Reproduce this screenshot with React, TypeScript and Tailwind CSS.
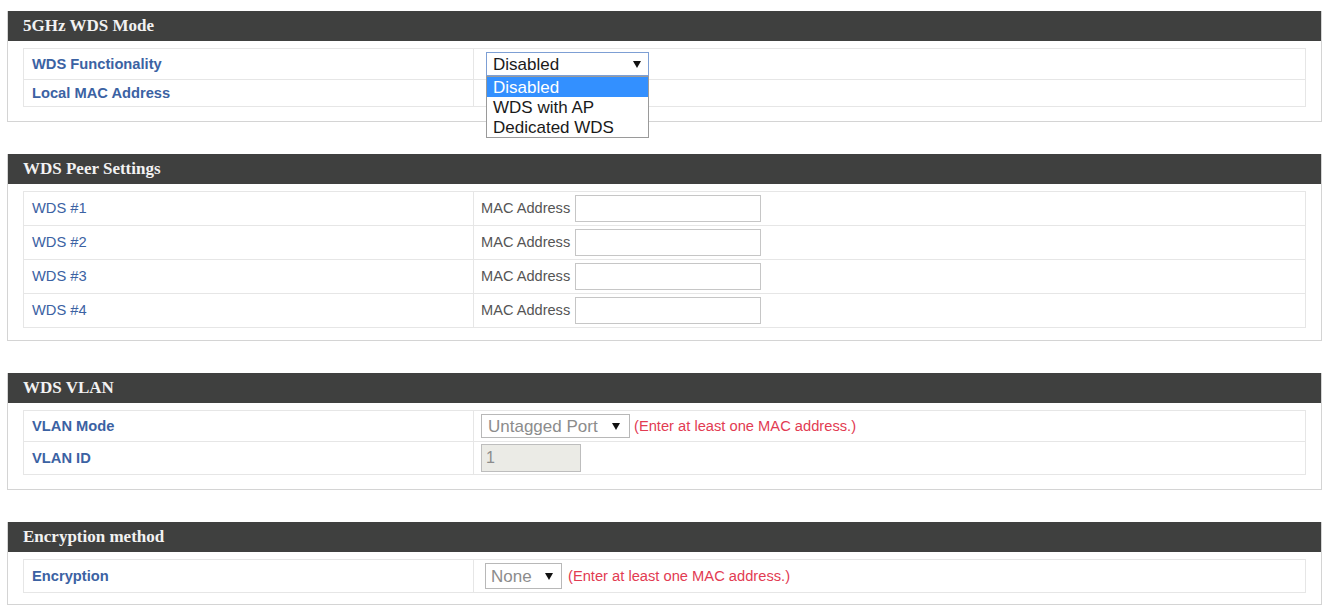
import type { ReactNode } from 'react';

const labelCls = "flex items-center border-r border-[#e6e6e6] pl-[8px] text-[14.7px] text-[#3b62a3]";
const redNote = "ml-[4px] text-[14.7px] text-[#e23b52]";

function Arrow() {
  return (
    <svg width="8" height="7" viewBox="0 0 8 7" className="shrink-0">
      <polygon points="0,0 8,0 4,7" fill="#111" />
    </svg>
  );
}

function Panel({ title, children, className = '', pb = 'pb-[14px]' }: { title: string; children: ReactNode; className?: string; pb?: string }) {
  return (
    <section className={`w-[1315px] border-x border-b border-[#d4d4d4] bg-white ${className}`}>
      <div className="flex h-[30px] items-center bg-[#3f403f] pl-[15px] font-['Liberation_Serif'] text-[17px] font-bold text-[#f2f2f2]">
        {title}
      </div>
      <div className={`px-[15px] pt-[7px] ${pb}`}>
        <div className="border-x border-t border-[#e6e6e6]">{children}</div>
      </div>
    </section>
  );
}

function Row({ label, height, bold = true, children }: { label: string; height: string; bold?: boolean; children?: ReactNode }) {
  return (
    <div className={`grid grid-cols-[450px_1fr] border-b border-[#e6e6e6] ${height}`}>
      <div className={`${labelCls} ${bold ? 'font-bold' : ''}`}>{label}</div>
      <div className="flex items-center pl-[7px]">{children}</div>
    </div>
  );
}

function MacInput() {
  return (
    <div className="flex items-center">
      <span className="text-[14.6px] text-[#555]">MAC Address</span>
      <div className="ml-[5px] h-[27px] w-[186px] border border-[#c6c6c6] bg-white" />
    </div>
  );
}

export default function App() {
  return (
    <div className="h-[609px] w-[1323px] overflow-hidden bg-white pl-[7px] pt-[11px] font-['Liberation_Sans',Arial,sans-serif]">
      <Panel title="5GHz WDS Mode">
        <Row label="WDS Functionality" height="h-[31px]">
          <div className="relative ml-[5px]">
            <div className="flex h-[24px] w-[163px] items-center justify-between border border-[#7d9fd4] bg-white pl-[6px] pr-[7px] text-[17px] leading-none text-[#1a1a1a]">
              <span>Disabled</span>
              <Arrow />
            </div>
            <div className="absolute left-0 top-full z-10 w-[163px] border border-[#9a9a9a] bg-white text-[17px] leading-none text-[#1a1a1a]">
              <div className="flex h-[20px] items-center bg-[#3390ff] pl-[6px] text-white">Disabled</div>
              <div className="flex h-[20px] items-center pl-[6px]">WDS with AP</div>
              <div className="flex h-[20px] items-center pl-[6px]">Dedicated WDS</div>
            </div>
          </div>
        </Row>
        <Row label="Local MAC Address" height="h-[27px]" />
      </Panel>

      <Panel title="WDS Peer Settings" className="mt-[32px]" pb="pb-[12px]">
        {['WDS #1', 'WDS #2', 'WDS #3', 'WDS #4'].map((l) => (
          <Row key={l} label={l} height="h-[34px]" bold={false}>
            <MacInput />
          </Row>
        ))}
      </Panel>

      <Panel title="WDS VLAN" className="mt-[32px]">
        <Row label="VLAN Mode" height="h-[31px]">
          <div className="flex items-center">
            <div className="flex h-[24px] w-[149px] items-center justify-between border border-[#b8b8b8] bg-white pl-[6px] pr-[9px] text-[17px] leading-none text-[#8c8c8c]">
              <span>Untagged Port</span>
              <Arrow />
            </div>
            <span className={redNote}>(Enter at least one MAC address.)</span>
          </div>
        </Row>
        <Row label="VLAN ID" height="h-[33px]">
          <div className="flex h-[28px] w-[100px] items-center border border-[#bdbdbd] bg-[#ebebe6] pl-[4px] text-[16px] text-[#8c8c8c]">
            1
          </div>
        </Row>
      </Panel>

      <Panel title="Encryption method" className="mt-[32px]" pb="pb-[11px]">
        <Row label="Encryption" height="h-[33px]">
          <div className="ml-[4px] flex items-center">
            <div className="flex h-[26px] w-[77px] items-center justify-between border border-[#b8b8b8] bg-white pl-[5px] pr-[8px] text-[17px] leading-none text-[#8c8c8c]">
              <span>None</span>
              <Arrow />
            </div>
            <span className="ml-[6px] text-[14.7px] text-[#e23b52]">(Enter at least one MAC address.)</span>
          </div>
        </Row>
      </Panel>
    </div>
  );
}
